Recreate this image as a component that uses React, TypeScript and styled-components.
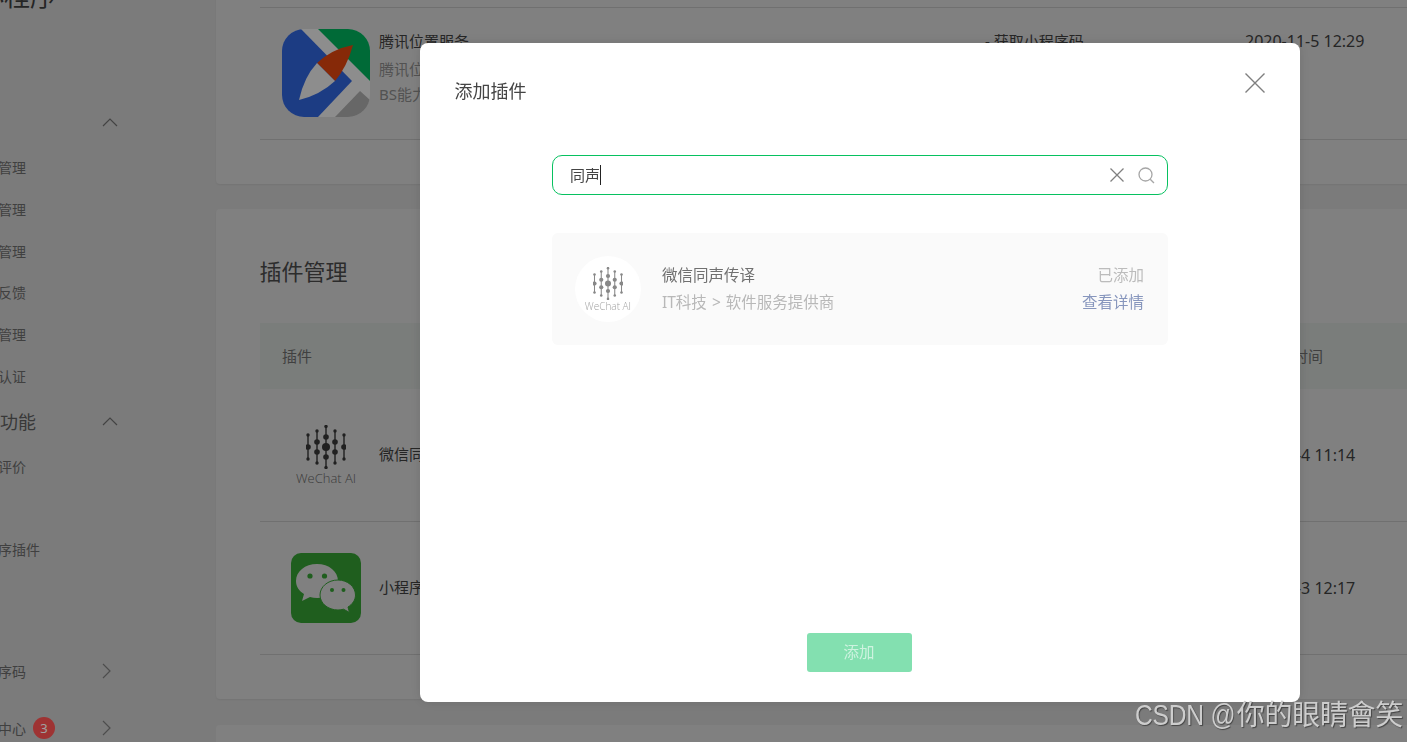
import React from "react";
import styled, { createGlobalStyle } from "styled-components";

const GlobalStyle = createGlobalStyle`
  html, body {
    margin: 0;
    height: 100%;
    overflow: hidden;
    background: #c3c3c3;
  }
  #root {
    height: 100%;
    overflow: hidden;
  }
  * {
    box-sizing: border-box;
  }
`;

const FONT = `"Noto Sans", "Noto Sans CJK SC", sans-serif`;

const Page = styled.div`
  display: flex;
  margin: -24px 0 0 -36px;
  width: 1600px;
  font-family: ${FONT};
  color: #3c3c3c;
`;

const Sidebar = styled.aside`
  flex: 0 0 252px;
  display: flex;
  flex-direction: column;
`;

const Brand = styled.div`
  height: 40px;
  line-height: 40px;
  padding-left: 14px;
  font-size: 26px;
  color: #3c3c3c;
  margin-bottom: 85px;
`;

const GroupRow = styled.div<{ $gap?: number }>`
  display: flex;
  align-items: center;
  justify-content: space-between;
  height: 42px;
  padding-right: 98px;
  margin-top: ${(p) => p.$gap ?? 0}px;
  font-size: 18px;
  color: #5a5a5a;
`;

const GroupTitle = styled.span`
  margin-bottom: 2px;
`;

const NavList = styled.div<{ $gap?: number }>`
  margin-top: ${(p) => p.$gap ?? 4}px;
`;

const NavItem = styled.div`
  height: 41.8px;
  line-height: 41.8px;
  padding-left: 6px;
  font-size: 14px;
  color: #666;
`;

const LinkRow = styled.div<{ $gap?: number }>`
  display: flex;
  align-items: center;
  height: 42px;
  padding: 0 98px 0 6px;
  margin-top: ${(p) => p.$gap ?? 0}px;
  font-size: 14px;
  color: #666;
  svg {
    margin-left: auto;
  }
`;

const Badge = styled.span`
  display: inline-flex;
  align-items: center;
  justify-content: center;
  width: 22px;
  height: 22px;
  margin-left: 7px;
  border-radius: 50%;
  background: #fa5151;
  color: #fff;
  font-size: 13px;
`;

const Main = styled.main`
  flex: 1;
  display: flex;
  flex-direction: column;
`;

const Card = styled.section<{ $gap?: number; $top?: number }>`
  background: #cbcbcb;
  border-radius: 4px;
  margin-top: ${(p) => p.$gap ?? 0}px;
  padding: ${(p) => p.$top ?? 47}px 0 44px 44px;
  box-shadow: 0 1px 2px rgba(0, 0, 0, 0.06);
`;

const CardTitle = styled.h2`
  margin: 0 0 37px -0.5px;
  font-size: 22px;
  font-weight: 400;
  line-height: 30px;
  color: #464646;
`;

const columns = "97px 606px 260px 1fr";

const TableHead = styled.div`
  display: grid;
  grid-template-columns: ${columns};
  align-items: center;
  height: 66px;
  padding: 0 0 2px 22px;
  background: #c2c6c3;
  font-size: 15px;
  color: #666;
`;

const HeadPlugin = styled.span`
  grid-column: span 2;
`;

const HeadTime = styled.span`
  padding-left: 18px;
`;

const Row = styled.div<{ $first?: boolean; $top?: boolean }>`
  display: grid;
  grid-template-columns: ${columns};
  align-items: ${(p) => (p.$top ? "start" : "center")};
  height: 133px;
  padding-left: 22px;
  padding-top: ${(p) => (p.$top ? 21 : 0)}px;
  border-bottom: 1px solid #b1b1b1;
  border-top: ${(p) => (p.$first ? "1px solid #b1b1b1" : "none")};
  font-size: 15px;
  color: #3c3c3c;
`;

const IconCell = styled.div`
  width: 88px;
  display: flex;
  justify-content: center;
`;

const Name = styled.div`
  line-height: 20px;
  margin-bottom: 2px;
`;

const TimeText = styled.div`
  font-size: 16px;
  line-height: 20px;
  margin-bottom: 1px;
`;

const TopOffset = styled.div`
  padding-top: 2px;
`;

const Desc = styled.div`
  margin-top: 6px;
  line-height: 25px;
  color: #828282;
`;

const LastCard = styled.section`
  height: 60px;
  margin-top: 26px;
  background: #cbcbcb;
  border-radius: 4px;
`;

/* dim layer + dialog */
const Scrim = styled.div`
  position: fixed;
  inset: 0;
  display: flex;
  align-items: flex-start;
  padding: 43px 0 0 420px;
  background: rgba(0, 0, 0, 0.37);
  font-family: ${FONT};
`;

const Modal = styled.div`
  display: flex;
  flex-direction: column;
  align-items: center;
  width: 880px;
  height: 659px;
  background: #fff;
  border-radius: 8px;
  box-shadow: 0 0 12px rgba(0, 0, 0, 0.12);
`;

const ModalHeader = styled.header`
  display: flex;
  align-items: flex-start;
  justify-content: space-between;
  align-self: stretch;
  height: 112px;
  padding: 30px 35px 0 34.5px;
`;

const ModalTitle = styled.div`
  font-size: 18px;
  line-height: 36px;
  color: #444;
`;

const CloseIcon = styled.svg`
  width: 20px;
  height: 20px;
  stroke: #7f7f7f;
  stroke-width: 1.4;
`;

const SearchBox = styled.div`
  display: flex;
  align-items: center;
  flex: 0 0 40px;
  width: 616px;
  padding: 0 12px 0 17px;
  border: 1px solid #07c160;
  border-radius: 10px;
  font-size: 15px;
  color: #444;
`;

const Query = styled.span`
  margin-bottom: 2px;
`;

const Caret = styled.span`
  width: 1px;
  height: 20px;
  background: #222;
`;

const ClearIcon = styled.svg`
  width: 14px;
  height: 14px;
  margin-left: auto;
  stroke: #808080;
  stroke-width: 1.3;
`;

const SearchIcon = styled.svg`
  width: 17px;
  height: 17px;
  margin-left: 14px;
  fill: none;
  stroke: #a6a6a6;
  stroke-width: 1.3;
`;

const Result = styled.div`
  display: flex;
  align-items: center;
  flex: 0 0 112px;
  width: 616px;
  margin-top: 38px;
  padding: 0 24px 0 23px;
  background: #fafafa;
  border-radius: 6px;
  font-size: 15.5px;
  line-height: 27px;
`;

const Avatar = styled.div`
  display: flex;
  align-items: center;
  justify-content: center;
  flex: 0 0 66px;
  height: 66px;
  margin-right: 21px;
  background: #fff;
  border-radius: 50%;
`;

const ResultName = styled.div`
  color: #707070;
`;

const ResultMeta = styled.div`
  color: #b8b8b8;
  white-space: pre;
  word-spacing: 1px;
`;

const ResultSide = styled.div`
  margin-left: auto;
  text-align: right;
`;

const Added = styled.div`
  color: #bcbcbc;
`;

const DetailLink = styled.a`
  display: block;
  color: #8796bd;
`;

const AddButton = styled.button`
  margin: auto 2px 30px 0;
  width: 105px;
  height: 39px;
  padding: 0 0 2px;
  border: 0;
  border-radius: 3px;
  background: #83e0b0;
  color: rgba(255, 255, 255, 0.6);
  font-family: inherit;
  font-size: 15.5px;
`;

const Watermark = styled.div`
  position: fixed;
  right: 4px;
  bottom: 9px;
  font-family: "Liberation Sans", "Noto Sans CJK TC", sans-serif;
  font-size: 28px;
  line-height: 34px;
  letter-spacing: -0.3px;
  white-space: nowrap;
  color: #cdcdcd;
  text-shadow: 1px 1px 1px rgba(0, 0, 0, 0.45);
`;

const WatermarkLatin = styled.span`
  display: inline-block;
  width: 102px;
  font-size: 29px;
  transform: scaleX(0.85);
  transform-origin: left center;
`;

const LogoBox = styled.div`
  display: flex;
  flex-direction: column;
  align-items: center;
`;

const LogoLabel = styled.span<{ $size: number; $color: string; $gap: number }>`
  margin-top: ${(p) => p.$gap}px;
  font-family: "Open Sans", sans-serif;
  font-size: ${(p) => p.$size}px;
  line-height: 1.1;
  font-weight: 300;
  color: ${(p) => p.$color};
  white-space: nowrap;
`;

const ChevronUp = () => (
  <svg width="16" height="9" viewBox="0 0 16 9" fill="none" stroke="#6b6b6b" strokeWidth="1.2">
    <path d="M1 8 8 1l7 7" />
  </svg>
);

const ChevronRight = () => (
  <svg width="16" height="16" viewBox="0 0 16 16" fill="none" stroke="#7a7a7a" strokeWidth="1.2">
    <path d="M1 1l7 7-7 7" />
  </svg>
);

const MapIcon = () => (
  <svg width="88" height="88" viewBox="0 0 88 88">
    <defs>
      <clipPath id="map-clip">
        <rect width="88" height="88" rx="22" />
      </clipPath>
    </defs>
    <g clipPath="url(#map-clip)">
      <rect width="88" height="88" fill="#e0e0e0" />
      <path d="M0 0h19l51 52-34 36H0z" fill="#2d5fd0" />
      <path d="M36 0h52v52z" fill="#00a858" />
      <path d="M53 88l25-26 10 9v17z" fill="#a3a3a3" />
      <path d="M71 16Q50 20 35 34l18 18Q65 38 71 16z" fill="#d4420d" />
      <path d="M35 34Q22 48 17 71q21-5 36-19z" fill="#e0e0e0" />
    </g>
  </svg>
);

const WeChatIcon = () => (
  <svg width="70" height="70" viewBox="0 0 70 70">
    <rect width="70" height="70" rx="10" fill="#319530" />
    <path d="M26 11c-12 0-21 7.500-21 17 0 5.500 3 10 8 13l-2 7 8-4c2.300.6 4.600 1 7 1 12 0 21-7.500 21-17s-9-17-21-17z" fill="#cbcbcb" />
    <circle cx="19" cy="23" r="2.600" fill="#319530" />
    <circle cx="33.500" cy="23" r="2.600" fill="#319530" />
    <path d="M47 27c-10 0-18 6.700-18 15s8 15 18 15c2 0 3.800-.3 5.500-.8l6 3.300-1.500-5.500c4.500-2.800 7.500-7 7.500-12 0-8.300-8-15-17.500-15z" fill="#cbcbcb" stroke="#319530" strokeWidth="1" />
    <circle cx="41" cy="37" r="2" fill="#319530" />
    <circle cx="52.500" cy="37" r="2" fill="#319530" />
  </svg>
);

const waveDots: [number, number, number][] = [
  [2, 10, 1.7], [2, 22, 2.8], [2, 34, 1.7],
  [11, 6, 1.7], [11, 17, 2.8], [11, 27, 2.8], [11, 38, 1.7],
  [20, 1.5, 1.7], [20, 12, 2.8], [20, 22, 4], [20, 32, 2.8], [20, 42.5, 1.7],
  [29, 6, 1.7], [29, 17, 2.8], [29, 27, 2.8], [29, 38, 1.7],
  [38, 10, 1.7], [38, 22, 2.8], [38, 34, 1.7],
];

const WeChatAi: React.FC<{
  width: number;
  color: string;
  labelColor: string;
  size: number;
  gap: number;
}> = ({ width, color, labelColor, size, gap }) => (
  <LogoBox>
    <svg width={width} height={width * 1.1} viewBox="0 0 40 44" fill={color} stroke={color}>
      <path d="M2 10v24M11 6v32M20 1v42M29 6v32M38 10v24" strokeWidth="1.4" fill="none" />
      {waveDots.map(([x, y, r]) => (
        <circle key={`${x}-${y}`} cx={x} cy={y} r={r} stroke="none" />
      ))}
    </svg>
    <LogoLabel $size={size} $color={labelColor} $gap={gap}>
      WeChat AI
    </LogoLabel>
  </LogoBox>
);

const App: React.FC = () => {
  return (
    <>
      <GlobalStyle />
      <Page>
        <Sidebar>
          <Brand>小程序</Brand>
          <GroupRow>
            <GroupTitle>管理</GroupTitle>
            <ChevronUp />
          </GroupRow>
          <NavList>
            <NavItem>版本管理</NavItem>
            <NavItem>成员管理</NavItem>
            <NavItem>数据管理</NavItem>
            <NavItem>用户反馈</NavItem>
            <NavItem>权限管理</NavItem>
            <NavItem>微信认证</NavItem>
          </NavList>
          <GroupRow $gap={3}>
            <GroupTitle>基础功能</GroupTitle>
            <ChevronUp />
          </GroupRow>
          <NavList $gap={3}>
            <NavItem>用户评价</NavItem>
            <NavItem>客服</NavItem>
            <NavItem>小程序插件</NavItem>
          </NavList>
          <LinkRow $gap={79}>
            <span>小程序码</span>
            <ChevronRight />
          </LinkRow>
          <LinkRow $gap={15}>
            <span>消息中心</span>
            <Badge>3</Badge>
            <ChevronRight />
          </LinkRow>
        </Sidebar>
        <Main>
          <Card $top={31}>
            <Row $first $top>
              <IconCell>
                <MapIcon />
              </IconCell>
              <TopOffset>
                <Name>腾讯位置服务</Name>
                <Desc>
                  腾讯位置服务
                  <br />
                  BS能力
                </Desc>
              </TopOffset>
              <TopOffset>
                <Name>- 获取小程序码</Name>
              </TopOffset>
              <TopOffset>
                <TimeText>2020-11-5 12:29</TimeText>
              </TopOffset>
            </Row>
          </Card>
          <Card $gap={25}>
            <CardTitle>插件管理</CardTitle>
            <TableHead>
              <HeadPlugin>插件</HeadPlugin>
              <span>操作</span>
              <HeadTime>添加时间</HeadTime>
            </TableHead>
            <Row>
              <IconCell>
                <WeChatAi width={40} color="#333" labelColor="#5e5e5e" size={13} gap={2} />
              </IconCell>
              <Name>微信同声传译</Name>
              <Name>查看详情</Name>
              <TimeText>2020-9-4 11:14</TimeText>
            </Row>
            <Row>
              <IconCell>
                <WeChatIcon />
              </IconCell>
              <Name>小程序直播</Name>
              <Name>查看详情</Name>
              <TimeText>2020-9-3 12:17</TimeText>
            </Row>
          </Card>
          <LastCard />
        </Main>
      </Page>
      <Scrim>
        <Modal>
          <ModalHeader>
            <ModalTitle>添加插件</ModalTitle>
            <CloseIcon viewBox="0 0 20 20">
              <path d="M.5.500l19 19M19.500.500l-19 19" />
            </CloseIcon>
          </ModalHeader>
          <SearchBox>
            <Query>同声</Query>
            <Caret />
            <ClearIcon viewBox="0 0 14 14">
              <path d="M.5.500l13 13M13.500.500l-13 13" />
            </ClearIcon>
            <SearchIcon viewBox="0 0 17 17">
              <circle cx="7.500" cy="7.500" r="6.500" />
              <path d="M12.200 12.200 16 16" />
            </SearchIcon>
          </SearchBox>
          <Result>
            <Avatar>
              <WeChatAi width={30} color="#888" labelColor="#a0a0a0" size={10} gap={1} />
            </Avatar>
            <div>
              <ResultName>微信同声传译</ResultName>
              <ResultMeta>IT科技 &gt; 软件服务提供商</ResultMeta>
            </div>
            <ResultSide>
              <Added>已添加</Added>
              <DetailLink>查看详情</DetailLink>
            </ResultSide>
          </Result>
          <AddButton>添加</AddButton>
        </Modal>
      </Scrim>
      <Watermark>
        <WatermarkLatin>CSDN @</WatermarkLatin>你的眼睛會笑
      </Watermark>
    </>
  );
};

export default App;
